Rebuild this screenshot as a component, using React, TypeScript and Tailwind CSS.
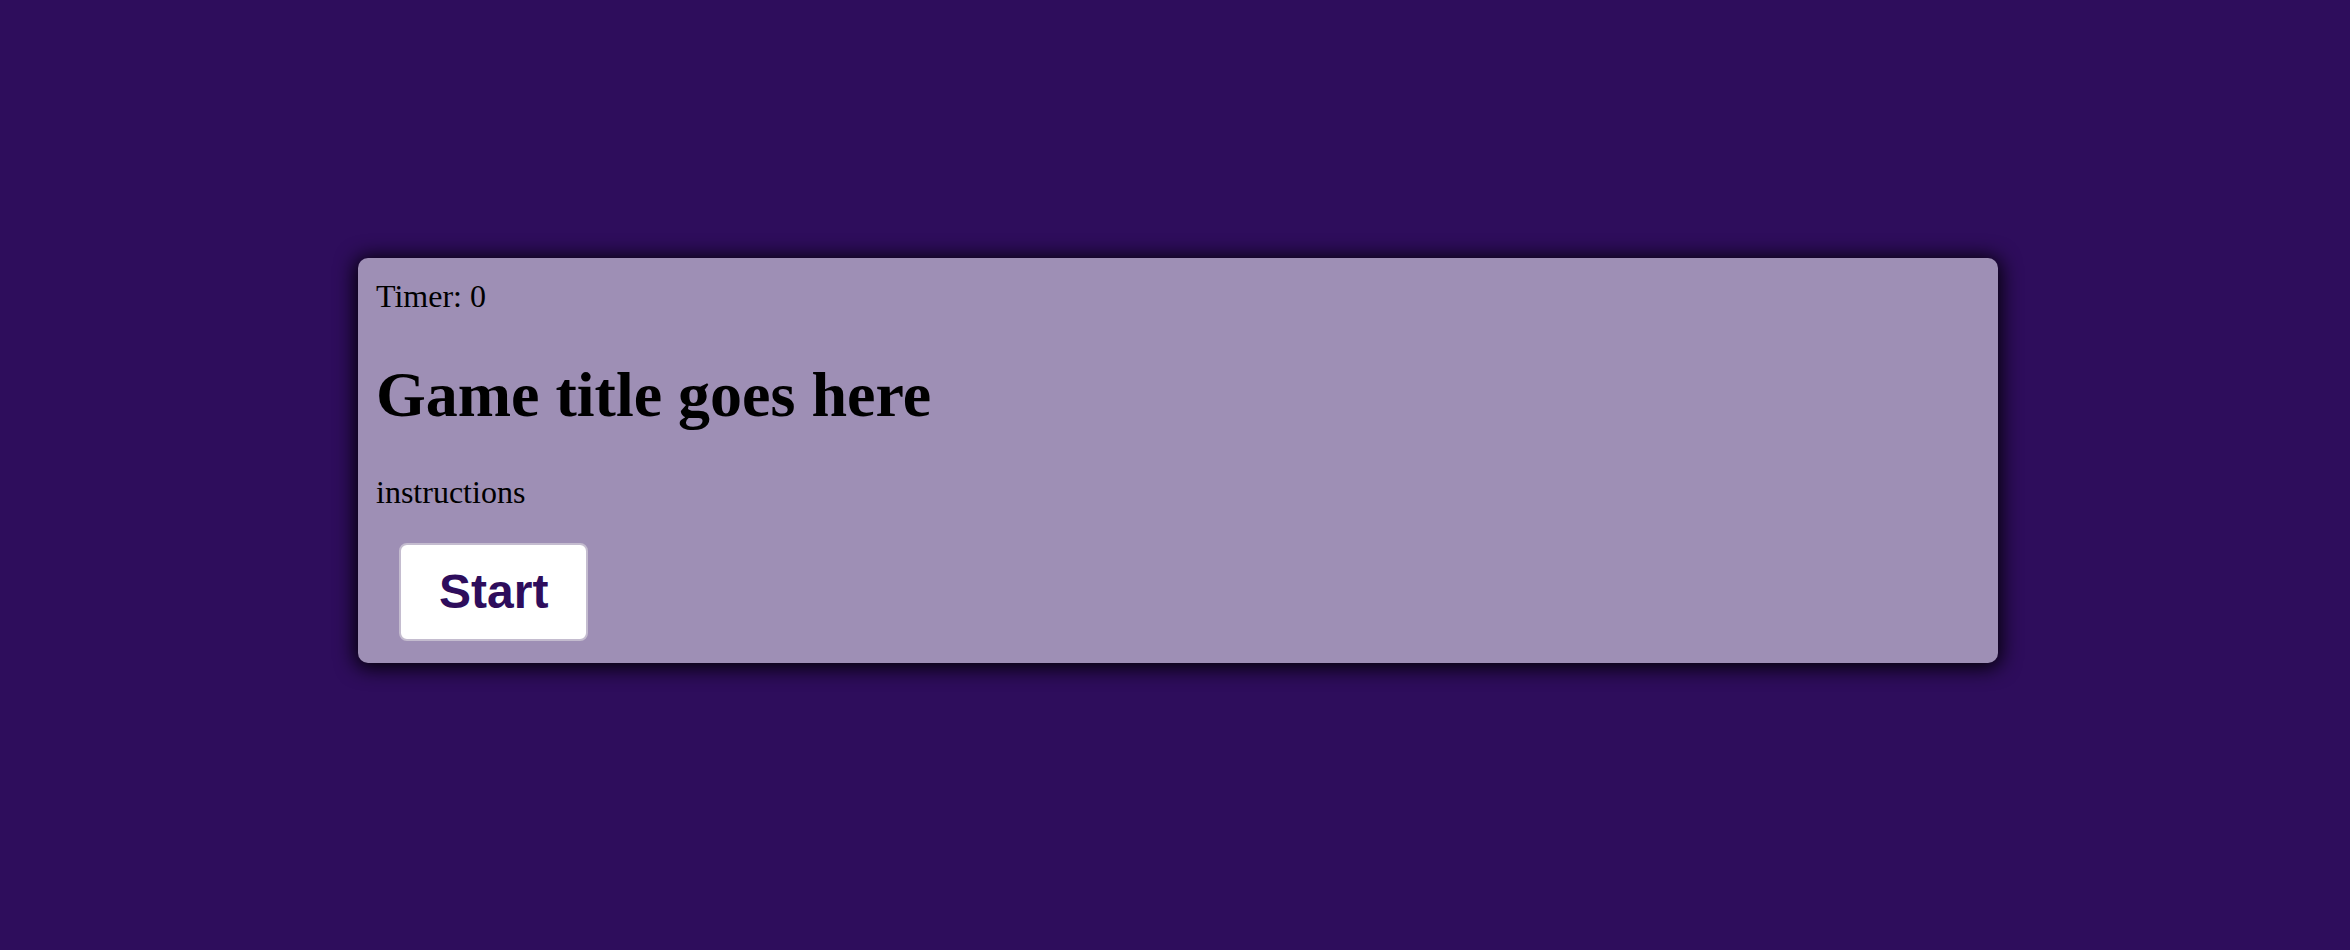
export default function App() {
  return (
    <div className="min-h-screen w-full bg-[#2e0d5c] pt-[258px] pl-[358px] font-['Liberation_Serif',serif] text-black">
      <div className="w-[1640px] rounded-[10px] bg-[#9e8fb5] px-[18px] pt-[20px] pb-[22px] shadow-[0_2px_20px_3px_rgba(0,0,0,0.95)]">
        <div className="text-[32px] leading-[36.8px]">Timer: 0</div>
        <h1 className="my-[43px] text-[64px] font-bold leading-[73.5px]">Game title goes here</h1>
        <div className="text-[32px] leading-[36.8px]">instructions</div>
        <button
          className="ml-[23px] mt-[31.5px] rounded-[8px] border-2 border-[#c4bccf] bg-white px-[38px] py-[19.5px] font-['Liberation_Sans',Arial,sans-serif] text-[48px] font-bold leading-[55px] text-[#2e0d5c]"
        >
          Start
        </button>
      </div>
    </div>
  );
}
